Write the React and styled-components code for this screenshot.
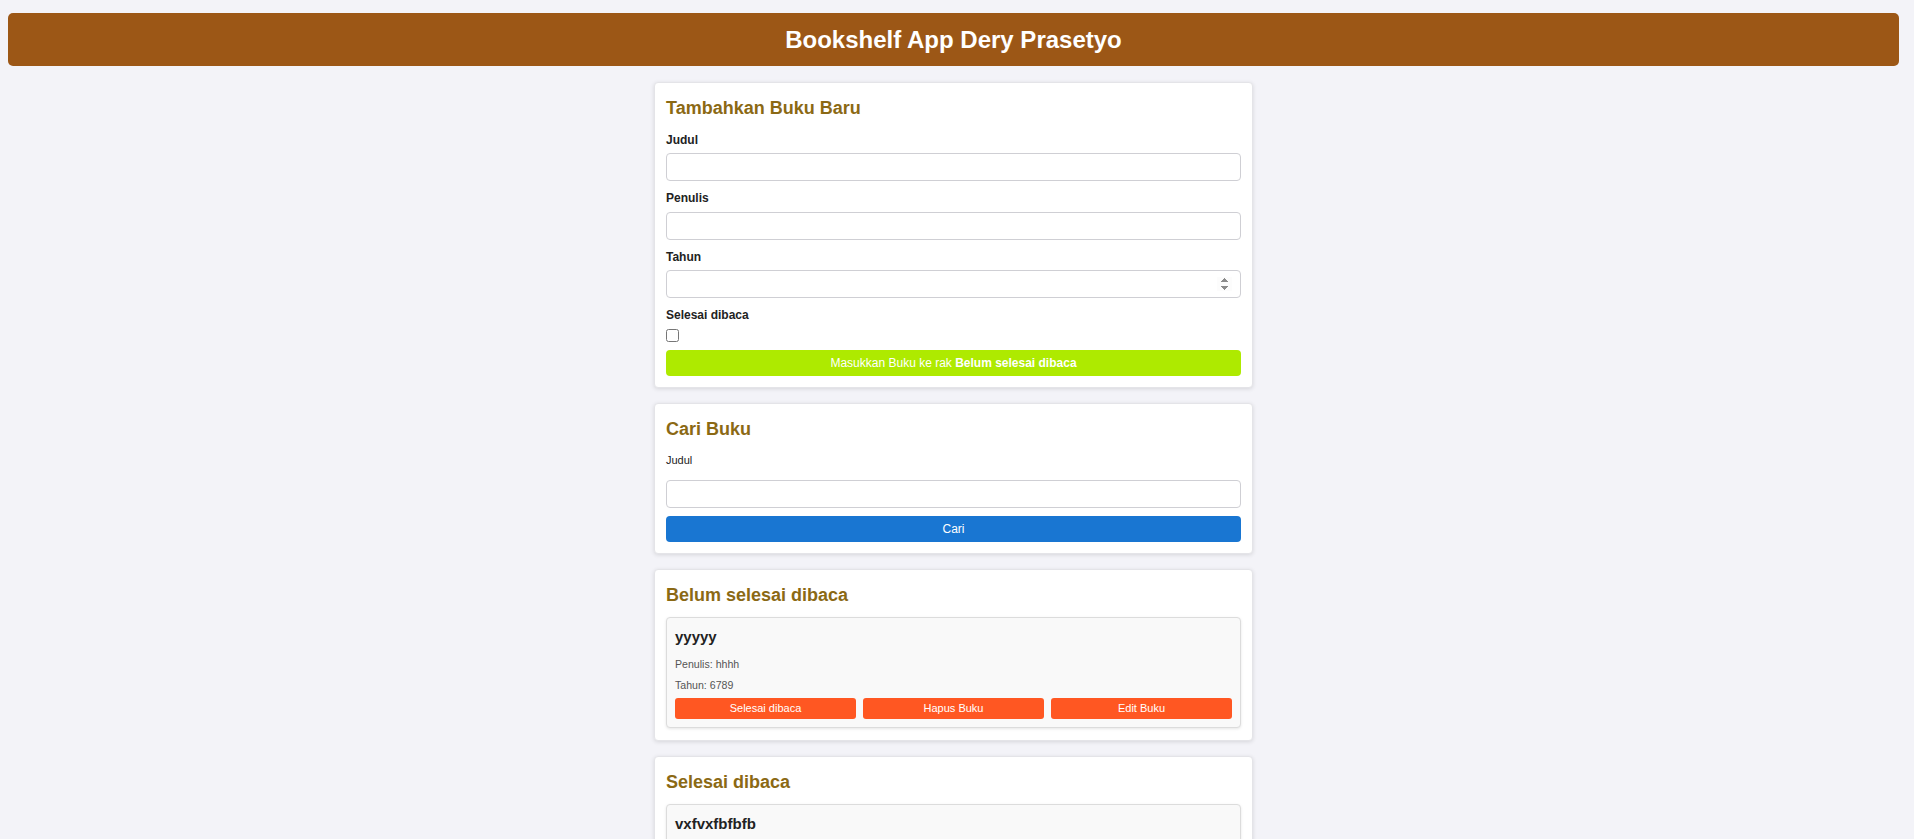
import React from 'react';
import styled, { createGlobalStyle } from 'styled-components';

const GlobalStyle = createGlobalStyle`
  * { box-sizing: border-box; }
  body {
    margin: 8px 15px 8px 8px;
    background: #f3f3f8;
    font-family: "Liberation Sans", Arial, sans-serif;
    color: #333;
  }
`;

const Header = styled.header`
  margin-top: 5px;
  background: #9c5716;
  border-radius: 5px;
  padding: 12.5px 16px;
  text-align: center;
`;

const HeaderTitle = styled.h1`
  margin: 0;
  font-size: 24px;
  line-height: 28px;
  font-weight: 700;
  color: #fff;
`;

const Main = styled.main`
  width: 599px;
  margin: 15.5px auto 0;
  display: flex;
  flex-direction: column;
  gap: 15px;
`;

const Card = styled.section`
  background: #fff;
  border: 1px solid #e4e4e8;
  border-radius: 4px;
  box-shadow: 0 1px 4px rgba(0, 0, 0, 0.12);
  padding: 11px;
`;

const CardTitle = styled.h2`
  margin: 4px 0 ${(p) => p.$mb ?? 14}px;
  font-size: 18px;
  line-height: 21px;
  font-weight: 700;
  color: #8b6914;
`;

const Form = styled.form`
  display: flex;
  flex-direction: column;
`;

const Field = styled.div`
  display: flex;
  flex-direction: column;
  align-items: flex-start;
  & + & {
    margin-top: 10px;
  }
`;

const Label = styled.label`
  font-size: 12px;
  line-height: 14px;
  font-weight: 700;
  color: #222;
  margin-bottom: 6.5px;
`;

const SearchLabel = styled.label`
  font-size: 11px;
  line-height: 13px;
  font-weight: 400;
  color: #222;
  margin-bottom: 13px;
`;

const Input = styled.input`
  width: 100%;
  height: 28px;
  border: 1px solid #cfcfd4;
  border-radius: 4px;
  padding: 0 8px;
  background: #fff;
  font: 13px "Liberation Sans", Arial, sans-serif;
  color: #222;
  &::-webkit-inner-spin-button {
    opacity: 1;
  }
`;

const Checkbox = styled.input`
  margin: 0;
  width: 13px;
  height: 13px;
`;

const Button = styled.button`
  display: block;
  width: 100%;
  height: ${(p) => p.$h || 26}px;
  margin-top: ${(p) => p.$mt || 0}px;
  border: none;
  border-radius: ${(p) => p.$r || 4}px;
  background: ${(p) => p.$bg};
  color: #fff;
  font-family: "Liberation Sans", Arial, sans-serif;
  font-size: ${(p) => p.$fs || 12}px;
  cursor: pointer;
  padding: 0;
`;

const BookList = styled.div`
  display: flex;
  flex-direction: column;
  gap: 12px;
  margin-bottom: 1px;
`;

const BookItem = styled.article`
  background: #f9f9f9;
  border: 1px solid #dcdcdc;
  border-radius: 4px;
  box-shadow: 0 1px 3px rgba(0, 0, 0, 0.1);
  padding: 8px;
`;

const BookTitle = styled.h3`
  margin: 2px 0 12px;
  font-size: 15px;
  line-height: 18px;
  font-weight: 700;
  color: #222;
`;

const BookMeta = styled.p`
  margin: 0 0 9.5px;
  font-size: 10.6px;
  line-height: 12px;
  color: #555;
  &:last-of-type {
    margin-bottom: 6.5px;
  }
`;

const ButtonRow = styled.div`
  display: grid;
  grid-template-columns: repeat(3, 1fr);
  gap: 7px;
`;

const books = {
  unread: [{ id: 1, title: 'yyyyy', author: 'hhhh', year: 6789 }],
  read: [{ id: 2, title: 'vxfvxfbfbfb', author: 'fbfbfb', year: 2023 }],
};

function Book({ book, toggleLabel }) {
  return (
    <BookItem>
      <BookTitle>{book.title}</BookTitle>
      <BookMeta>Penulis: {book.author}</BookMeta>
      <BookMeta>Tahun: {book.year}</BookMeta>
      <ButtonRow>
        <Button type="button" $bg="#ff5722" $h={21} $fs={11} $r={3}>{toggleLabel}</Button>
        <Button type="button" $bg="#ff5722" $h={21} $fs={11} $r={3}>Hapus Buku</Button>
        <Button type="button" $bg="#ff5722" $h={21} $fs={11} $r={3}>Edit Buku</Button>
      </ButtonRow>
    </BookItem>
  );
}

export default function App() {
  return (
    <>
      <GlobalStyle />
      <Header>
        <HeaderTitle>Bookshelf App Dery Prasetyo</HeaderTitle>
      </Header>
      <Main>
        <Card>
          <CardTitle>Tambahkan Buku Baru</CardTitle>
          <Form onSubmit={(e) => e.preventDefault()}>
            <Field>
              <Label htmlFor="bookTitle">Judul</Label>
              <Input id="bookTitle" type="text" />
            </Field>
            <Field>
              <Label htmlFor="bookAuthor">Penulis</Label>
              <Input id="bookAuthor" type="text" />
            </Field>
            <Field>
              <Label htmlFor="bookYear">Tahun</Label>
              <Input id="bookYear" type="number" />
            </Field>
            <Field>
              <Label htmlFor="bookComplete">Selesai dibaca</Label>
              <Checkbox id="bookComplete" type="checkbox" />
            </Field>
            <Button type="submit" $bg="#aeea00" $mt={8}>
              Masukkan Buku ke rak <b>Belum selesai dibaca</b>
            </Button>
          </Form>
        </Card>

        <Card>
          <CardTitle>Cari Buku</CardTitle>
          <Form onSubmit={(e) => e.preventDefault()}>
            <SearchLabel htmlFor="searchTitle">Judul</SearchLabel>
            <Input id="searchTitle" type="text" />
            <Button type="submit" $bg="#1976d2" $mt={8}>Cari</Button>
          </Form>
        </Card>

        <Card>
          <CardTitle $mb={11}>Belum selesai dibaca</CardTitle>
          <BookList>
            {books.unread.map((b) => (
              <Book key={b.id} book={b} toggleLabel="Selesai dibaca" />
            ))}
          </BookList>
        </Card>

        <Card>
          <CardTitle $mb={11}>Selesai dibaca</CardTitle>
          <BookList>
            {books.read.map((b) => (
              <Book key={b.id} book={b} toggleLabel="Belum selesai dibaca" />
            ))}
          </BookList>
        </Card>
      </Main>
    </>
  );
}
